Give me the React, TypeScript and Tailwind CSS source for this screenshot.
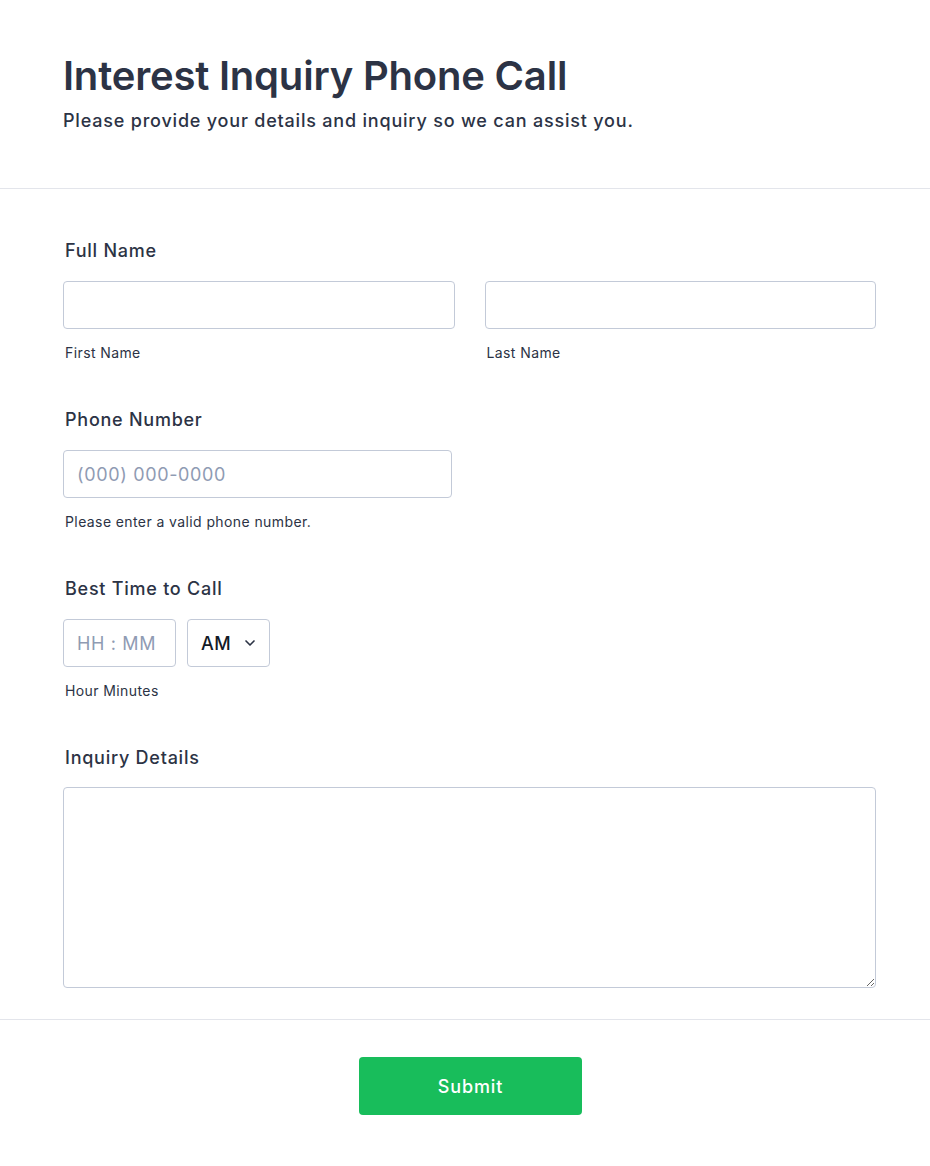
import { ChevronDown } from "lucide-react";

const font = { fontFamily: "Inter, 'Noto Sans', sans-serif" };

function Label({ children }: { children: string }) {
  return (
    <div className="pl-[2px] text-[18px] font-medium leading-[24px] tracking-[0.75px] text-[#2c3345]">
      {children}
    </div>
  );
}

function Sub({ children }: { children: string }) {
  return (
    <div className="mt-[14px] pl-[2px] text-[14px] leading-[20px] tracking-[0.4px] text-[#2c3345]">
      {children}
    </div>
  );
}

const inputCls =
  "block h-[48px] rounded-[4px] border border-[#c3cad8] bg-white px-[13px] text-[18px] tracking-[0.65px] text-[#2c3345] outline-none placeholder:text-[#8f9bb3]";

export default function App() {
  return (
    <div className="min-h-screen bg-white" style={font}>
      {/* header */}
      <div className="border-b border-[#e3e5eb] px-[63px] pb-[55px] pt-[52px]">
        <h1 className="text-[40px] font-semibold leading-[48px] tracking-[-0.2px] text-[#2c3345]">
          Interest Inquiry Phone Call
        </h1>
        <p className="mt-[9px] text-[18px] font-medium leading-[24px] tracking-[0.8px] text-[#2c3345]">
          Please provide your details and inquiry so we can assist you.
        </p>
      </div>

      {/* fields */}
      <div className="border-b border-[#e3e5eb] px-[63px] pb-[31px] pt-[50px]">
        <div className="w-[813px]">
          <div className="mb-[45px]">
            <Label>Full Name</Label>
            <div className="mt-[18px] grid grid-cols-2 gap-[30px]">
              <div>
                <input className={inputCls + " w-full"} />
                <Sub>First Name</Sub>
              </div>
              <div>
                <input className={inputCls + " w-full"} />
                <Sub>Last Name</Sub>
              </div>
            </div>
          </div>

          <div className="mb-[45px]">
            <Label>Phone Number</Label>
            <input className={inputCls + " mt-[18px] w-[389px]"} placeholder="(000) 000-0000" />
            <Sub>Please enter a valid phone number.</Sub>
          </div>

          <div className="mb-[45px]">
            <Label>Best Time to Call</Label>
            <div className="mt-[18px] flex gap-[11px]">
              <input className={inputCls + " w-[113px]"} placeholder="HH : MM" />
              <div className="flex h-[48px] w-[83px] items-center justify-between rounded-[4px] border border-[#c3cad8] bg-white pl-[13px] pr-[11px]">
                <span className="text-[18px] font-medium tracking-[0.5px] text-[#131a26]">AM</span>
                <ChevronDown className="h-[16px] w-[16px] text-[#2c3345]" strokeWidth={2.5} />
              </div>
            </div>
            <Sub>Hour Minutes</Sub>
          </div>

          <div>
            <Label>Inquiry Details</Label>
            <textarea className="mt-[17px] block h-[201px] w-full rounded-[4px] border border-[#c3cad8] bg-white px-[13px] py-[10px] text-[16px] outline-none" />
          </div>
        </div>
      </div>

      {/* submit */}
      <div className="flex w-[941px] justify-center pb-[50px] pt-[37px]">
        <button className="h-[58px] w-[223px] rounded-[4px] bg-[#18bd5b] text-[18px] font-medium tracking-[0.9px] text-white">
          Submit
        </button>
      </div>
    </div>
  );
}
